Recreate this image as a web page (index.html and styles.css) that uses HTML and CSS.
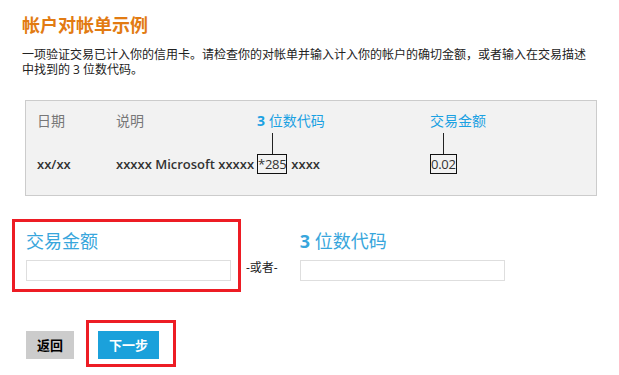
FILE: index.html
```html
<!DOCTYPE html>
<html lang="zh-CN">
<head>
    <meta charset="UTF-8">
    <meta name="viewport" content="width=device-width, initial-scale=1.0">
    <title>帐户对帐单示例</title>
    <link rel="stylesheet" href="styles.css">
</head>
<body>
    <div class="page">
        <h1 class="title">帐户对帐单示例</h1>
        <p class="intro">一项验证交易已计入你的信用卡。请检查你的对帐单并输入计入你的帐户的确切金额，或者输入在交易描述中找到的 3 位数代码。</p>

        <div class="sample">
            <div class="col col-date">
                <span class="head">日期</span>
                <span class="value">xx/xx</span>
            </div>
            <div class="col-desc">
                <div class="col col-prefix">
                    <span class="head">说明</span>
                    <span class="value">xxxxx Microsoft xxxxx</span>
                </div>
                <div class="callout">
                    <span class="callout-label"><b>3</b> 位数代码</span>
                    <span class="callout-mark">
                        <span class="callout-line"></span>
                        <span class="callout-box">*285</span>
                    </span>
                </div>
                <span class="value suffix">xxxx</span>
            </div>
            <div class="callout">
                <span class="callout-label">交易金额</span>
                <span class="callout-mark">
                    <span class="callout-line"></span>
                    <span class="callout-box">0.02</span>
                </span>
            </div>
        </div>

        <div class="form-row">
            <div class="field marked">
                <label class="field-label" for="amount">交易金额</label>
                <input class="field-input" id="amount" type="text">
            </div>
            <span class="or">-或者-</span>
            <div class="field">
                <label class="field-label" for="code"><b>3</b> 位数代码</label>
                <input class="field-input" id="code" type="text">
            </div>
        </div>

        <div class="actions">
            <button class="btn btn-back">返回</button>
            <div class="marked marked-btn">
                <button class="btn btn-next">下一步</button>
            </div>
        </div>
    </div>
</body>
</html>
```

FILE: styles.css
```css
body {
    margin: 0;
    background: #fff;
    font-family: "Open Sans", "Noto Sans CJK SC", sans-serif;
    color: #222;
}
.page {
    padding: 13px 22px 0 22px;
}
.title {
    margin: 0;
    font-size: 18px;
    line-height: 24px;
    font-weight: bold;
    color: #e27b12;
}
.intro {
    width: 570px;
    margin: 10px 0 0 0;
    font-size: 12px;
    line-height: 15px;
}

/* statement sample */
.sample {
    display: flex;
    margin: 23px 0 0 3px;
    padding: 11px 10px 21px 11px;
    background: #f2f2f2;
    border: 1px solid #cccccc;
}
.col {
    display: flex;
    flex-direction: column;
    justify-content: space-between;
}
.col-date {
    width: 79px;
}
.col-desc {
    display: flex;
    width: 314px;
}
.col-prefix {
    margin-right: 3px;
}
.head {
    font-size: 14px;
    line-height: 18px;
    color: #777;
}
.value {
    font-size: 13px;
    line-height: 18px;
    font-weight: 600;
    color: #333;
    padding-bottom: 1px;
}
.suffix {
    align-self: flex-end;
    margin-left: 4px;
}
.callout {
    display: flex;
    flex-direction: column;
    align-items: flex-start;
}
.callout-label {
    width: 0;
    white-space: nowrap;
    font-size: 14px;
    line-height: 18px;
    color: #1ba1e2;
    margin-bottom: 3px;
}
.callout-mark {
    display: flex;
    flex-direction: column;
    align-items: center;
}
.callout-line {
    width: 1px;
    height: 21px;
    background: #222;
}
.callout-box {
    border: 1px solid #111;
    padding: 0;
    font-size: 13px;
    line-height: 18px;
    letter-spacing: -0.3px;
    color: #333;
}

/* form */
.form-row {
    display: flex;
    align-items: flex-start;
    margin: 23px 0 0 -10px;
}
.field {
    padding: 10px 0 0 0;
}
.marked {
    border: 3px solid #ed1c24;
}
.field.marked {
    padding: 7px 7px 8px 11px;
}
.field-label {
    display: block;
    font-size: 18px;
    line-height: 24px;
    color: #38a6dc;
    margin-bottom: 7px;
}
.field-input {
    display: block;
    box-sizing: border-box;
    width: 205px;
    height: 21px;
    margin: 0;
    border: 1px solid #dedede;
    padding: 0 4px;
}
.or {
    margin: 41px 22px 0 5px;
    font-size: 12px;
    line-height: 16px;
    color: #222;
}

/* buttons */
.actions {
    display: flex;
    align-items: flex-start;
    margin: 28px 0 0 4px;
}
.btn {
    height: 28px;
    padding: 0 11px;
    border: 0;
    font-family: "Open Sans", "Noto Sans CJK SC", sans-serif;
    font-size: 13px;
    font-weight: bold;
    line-height: 28px;
}
.btn-back {
    margin: 11px 12px 0 0;
    background: #cccccc;
    color: #000;
}
.marked-btn {
    padding: 8px 14px 5px 9px;
}
.btn-next {
    display: block;
    background: #1ba1db;
    color: #fff;
}
```
